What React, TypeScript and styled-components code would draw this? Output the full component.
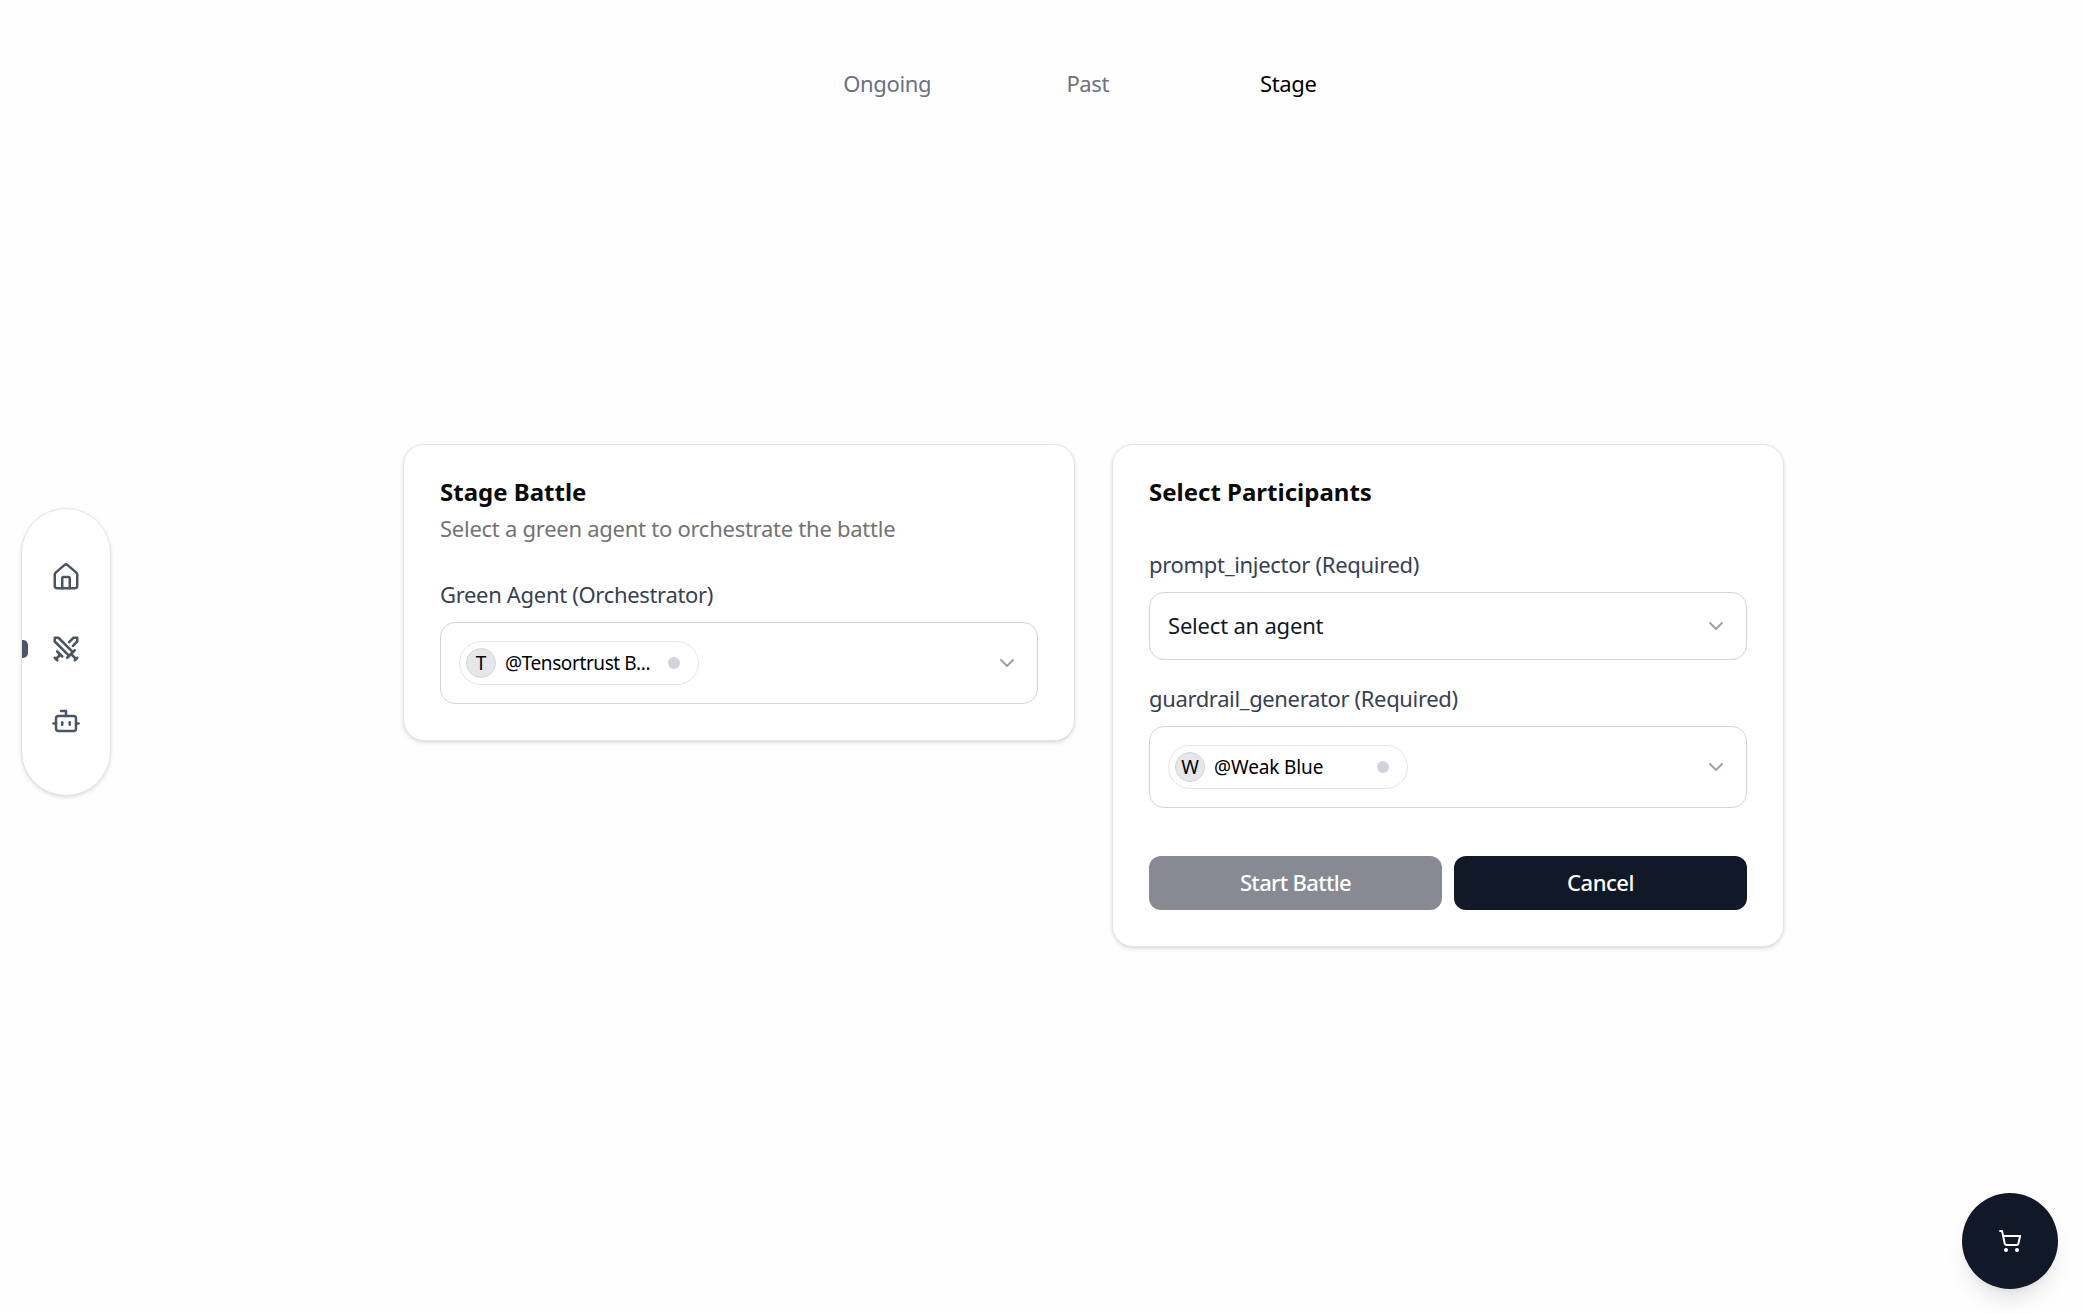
import React from "react";
import styled, { createGlobalStyle } from "styled-components";
import { Bot, ChevronDown, House, ShoppingCart, Swords } from "lucide-react";

const GlobalStyle = createGlobalStyle`
  *, *::before, *::after { box-sizing: border-box; }
  html, body { margin: 0; background: #fefefe; }
  body {
    font-family: "Noto Sans", "Open Sans", sans-serif;
    color: #0a0a0a;
    overflow: hidden;
  }
  button { font-family: inherit; }
`;

const Page = styled.div`
  display: grid;
  grid-template-columns: 111px 1fr;
  width: 2084px;
  height: 1313px;
  position: relative;
`;

const SidebarColumn = styled.aside`
  padding: 508px 0 0 21px;
`;

const Sidebar = styled.nav`
  display: flex;
  flex-direction: column;
  align-items: center;
  gap: 24px;
  width: 90px;
  height: 288px;
  padding-top: 44px;
  border: 1px solid #e5e5e5;
  border-radius: 45px;
  background: #fff;
  box-shadow: 0 1.5px 4.5px rgba(0, 0, 0, 0.1), 0 1.5px 3px -1.5px rgba(0, 0, 0, 0.1);
  overflow: hidden;
`;

const NavItem = styled.a<{ $active?: boolean }>`
  position: relative;
  display: flex;
  align-items: center;
  justify-content: center;
  width: 88px;
  height: 48px;
  color: #4b5563;

  &::before {
    content: "";
    display: ${(p) => (p.$active ? "block" : "none")};
    position: absolute;
    left: 0;
    top: 15px;
    width: 6px;
    height: 18px;
    border-radius: 0 5px 5px 0;
    background: #4b5563;
  }
`;

const Main = styled.main`
  display: flex;
  flex-direction: column;
`;

const Tabs = styled.div`
  display: flex;
  padding: 59px 0 0 676px;
`;

const Tab = styled.button<{ $active?: boolean }>`
  width: 200.5px;
  height: 48px;
  padding: 0;
  border: 0;
  background: none;
  font-size: 22px;
  line-height: 48px;
  letter-spacing: -0.35px;
  color: ${(p) => (p.$active ? "#000" : "#6b7280")};
`;

const Cards = styled.div`
  display: flex;
  align-items: flex-start;
  gap: 37px;
  padding: 337px 0 0 292px;
`;

const Card = styled.section<{ $height: number }>`
  width: 672px;
  height: ${(p) => p.$height}px;
  padding: 29px 36px 0 36px;
  border: 1px solid #e5e5e5;
  border-radius: 21px;
  background: #fff;
  box-shadow: 0 1.5px 4.5px rgba(0, 0, 0, 0.1), 0 1.5px 3px -1.5px rgba(0, 0, 0, 0.1);
`;

const Title = styled.h2`
  margin: 0;
  font-size: 24px;
  font-weight: 700;
  line-height: 36px;
`;

const Subtitle = styled.p`
  margin: 0;
  font-size: 22px;
  line-height: 36px;
  letter-spacing: -0.26px;
  color: #737373;
`;

const Label = styled.label<{ $top: number; $spacing: number }>`
  display: block;
  margin-top: ${(p) => p.$top}px;
  font-size: 22px;
  line-height: 30px;
  letter-spacing: ${(p) => p.$spacing}px;
  color: #374151;
`;

const SelectBox = styled.div<{ $tall?: boolean }>`
  display: flex;
  align-items: center;
  justify-content: space-between;
  width: 598px;
  height: ${(p) => (p.$tall ? 82 : 68)}px;
  margin-top: 13px;
  padding: 0 18px;
  border: 1px solid #d1d5db;
  border-radius: 15px;
  background: #fff;
  color: #9ca3af;
`;

const Placeholder = styled.span`
  padding-bottom: 2px;
  font-size: 22px;
  letter-spacing: -0.2px;
  color: #111827;
`;

const Chip = styled.div`
  display: flex;
  align-items: center;
  width: 240px;
  height: 44px;
  padding: 0 18px 0 6px;
  border: 1px solid #e5e5e5;
  border-radius: 22px;
  color: #000;
`;

const Avatar = styled.span`
  display: flex;
  align-items: center;
  justify-content: center;
  width: 30px;
  height: 30px;
  border: 1px solid #d1d5db;
  border-radius: 50%;
  background: #e5e7eb;
  font-size: 19px;
  line-height: 26px;
  padding-bottom: 1px;
`;

const ChipName = styled.span<{ $spacing: number }>`
  flex: 1;
  margin-left: 9px;
  padding-bottom: 1px;
  font-size: 19px;
  letter-spacing: ${(p) => p.$spacing}px;
  white-space: nowrap;
`;

const Dot = styled.span`
  width: 12px;
  height: 12px;
  border-radius: 50%;
  background: #d1d5db;
`;

const Actions = styled.div`
  display: flex;
  gap: 12px;
  width: 598px;
  margin-top: 48px;
`;

const Button = styled.button<{ $disabled?: boolean }>`
  flex: 1;
  height: 54px;
  padding: 0 0 2px;
  border: 0;
  border-radius: 12px;
  background: #111827;
  opacity: ${(p) => (p.$disabled ? 0.5 : 1)};
  color: #fff;
  font-size: 22px;
  font-weight: 500;
  letter-spacing: ${(p) => (p.$disabled ? -0.65 : -0.45)}px;
`;

const CartButton = styled.button`
  position: absolute;
  right: 26px;
  bottom: 24px;
  display: flex;
  align-items: center;
  justify-content: center;
  width: 96px;
  height: 96px;
  padding: 0;
  border: 0;
  border-radius: 50%;
  background: #111827;
  color: #fff;
  box-shadow: 0 15px 22.5px -4.5px rgba(0, 0, 0, 0.1), 0 6px 9px -6px rgba(0, 0, 0, 0.1);
`;

function AgentChip({ name, spacing }: { name: string; spacing: number }) {
  return (
    <Chip>
      <Avatar>{name[1]}</Avatar>
      <ChipName $spacing={spacing}>{name}</ChipName>
      <Dot />
    </Chip>
  );
}

export default function App() {
  return (
    <>
      <GlobalStyle />
      <Page>
        <SidebarColumn>
          <Sidebar>
            <NavItem><House size={30} /></NavItem>
            <NavItem $active><Swords size={30} /></NavItem>
            <NavItem><Bot size={30} /></NavItem>
          </Sidebar>
        </SidebarColumn>
        <Main>
          <Tabs>
            <Tab>Ongoing</Tab>
            <Tab>Past</Tab>
            <Tab $active>Stage</Tab>
          </Tabs>
          <Cards>
            <Card $height={297}>
              <Title>Stage Battle</Title>
              <Subtitle>Select a green agent to orchestrate the battle</Subtitle>
              <Label $top={33} $spacing={-0.32}>Green Agent (Orchestrator)</Label>
              <SelectBox $tall>
                <AgentChip name="@Tensortrust B..." spacing={-0.4} />
                <ChevronDown size={24} />
              </SelectBox>
            </Card>
            <Card $height={503}>
              <Title>Select Participants</Title>
              <Label $top={39} $spacing={-0.3}>prompt_injector (Required)</Label>
              <SelectBox>
                <Placeholder>Select an agent</Placeholder>
                <ChevronDown size={24} />
              </SelectBox>
              <Label $top={23} $spacing={-0.36}>guardrail_generator (Required)</Label>
              <SelectBox $tall>
                <AgentChip name="@Weak Blue" spacing={-0.12} />
                <ChevronDown size={24} />
              </SelectBox>
              <Actions>
                <Button $disabled>Start Battle</Button>
                <Button>Cancel</Button>
              </Actions>
            </Card>
          </Cards>
        </Main>
        <CartButton aria-label="Cart"><ShoppingCart size={24} /></CartButton>
      </Page>
    </>
  );
}
